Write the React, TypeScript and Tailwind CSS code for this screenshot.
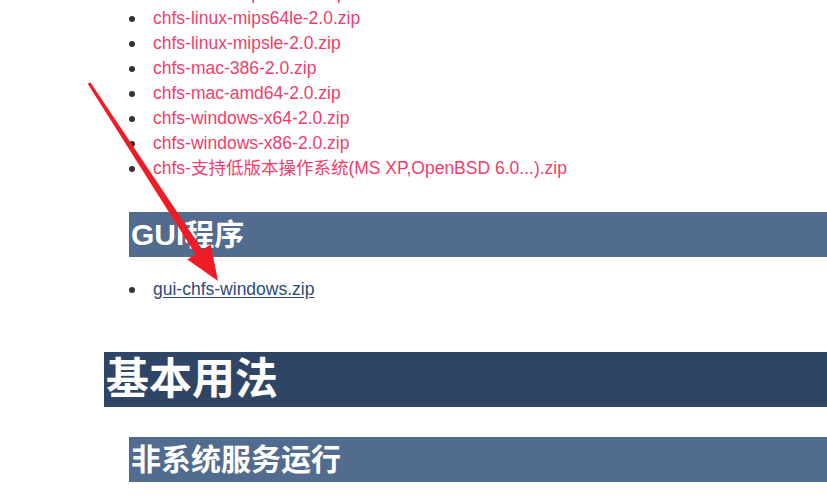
import React from "react";

const files = [
  "chfs-linux-mips64le-2.0.zip",
  "chfs-linux-mipsle-2.0.zip",
  "chfs-mac-386-2.0.zip",
  "chfs-mac-amd64-2.0.zip",
  "chfs-windows-x64-2.0.zip",
  "chfs-windows-x86-2.0.zip",
  "chfs-支持低版本操作系统(MS XP,OpenBSD 6.0...).zip",
];

const sans = "font-['Liberation_Sans','Noto_Sans_CJK_SC',sans-serif]";

function Item({ name, link }: { name: string; link?: boolean }) {
  return (
    <li className="flex h-[25px] items-center">
      <span className="ml-[129px] mr-[18px] mt-[2px] h-[6px] w-[6px] rounded-full bg-[#333]" />
      {link ? (
        <a className="text-[#2b4a7b] underline underline-offset-2">{name}</a>
      ) : (
        <a className="text-[#f03d6c]">{name}</a>
      )}
    </li>
  );
}

export default function App() {
  return (
    <div className={`relative h-[498px] w-[827px] overflow-hidden bg-white ${sans} text-[17.5px] leading-[25px]`}>
      <ul className="mt-[-19.5px]">
        <Item name="chfs-linux-mips64-2.0.zip" />
        {files.map((f) => (
          <Item key={f} name={f} />
        ))}
      </ul>

      <h3 className="ml-[129px] mt-[31.5px] flex h-[45px] items-center bg-[#526c8f] pl-[2px] text-[30px] font-bold text-white">
        GUI程序
      </h3>

      <ul className="mt-[19.5px]">
        <Item name="gui-chfs-windows.zip" link />
      </ul>

      <h1 className="ml-[104px] mt-[50.5px] flex h-[55px] items-center bg-[#2f4565] pl-[2px] text-[43px] font-bold text-white">
        基本用法
      </h1>

      <h2 className="ml-[129px] mt-[30px] flex h-[45px] items-center bg-[#526c8f] pl-[2px] text-[30px] font-bold text-white">
        非系统服务运行
      </h2>

      {/* red annotation arrow */}
      <svg className="pointer-events-none absolute left-0 top-0" width="827" height="498">
        <polygon points="87.7,83.8 90.3,82.2 202.4,249.8 195.6,254.2" fill="#ee1c25" />
        <polygon points="187.3,259.6 210.7,244.4 218,281" fill="#ee1c25" />
      </svg>
    </div>
  );
}
